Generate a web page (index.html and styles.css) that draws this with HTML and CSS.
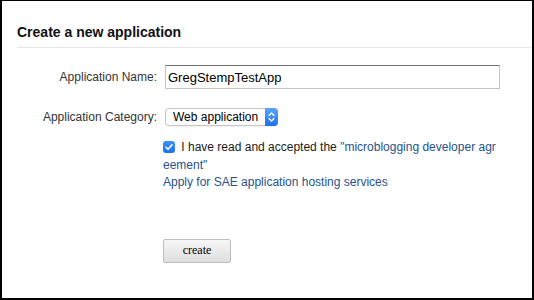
FILE: index.html
```html
<!DOCTYPE html>
<html>
<head>
<meta charset="utf-8">
<link rel="stylesheet" href="styles.css">
</head>
<body>
<div class="frame">
  <h2 class="title">Create a new application</h2>
  <div class="form">
    <div class="row row-name">
      <label class="label">Application Name:</label>
      <input class="text-input" type="text" value="GregStempTestApp">
    </div>
    <div class="row row-cat">
      <label class="label">Application Category:</label>
      <div class="select">
        <span class="select-text">Web application</span>
        <span class="select-arrow">
          <svg width="13" height="18" viewBox="0 0 13 18"><path d="M4 7.5 L6.5 5 L9 7.5 M4 10.5 L6.5 13 L9 10.5" fill="none" stroke="#fff" stroke-width="1.4" stroke-linecap="round" stroke-linejoin="round"/></svg>
        </span>
      </div>
    </div>
    <div class="agree">
      <p class="agree-text"><span class="check"><svg width="12" height="12" viewBox="0 0 12 12"><path d="M3 6.3 L5 8.3 L9 3.8" fill="none" stroke="#fff" stroke-width="1.6" stroke-linecap="round" stroke-linejoin="round"/></svg></span> I have read and accepted the <a class="link" href="#">"microblogging developer agreement"</a></p>
      <a class="link apply" href="#">Apply for SAE application hosting services</a>
    </div>
    <div class="actions">
      <button class="btn" type="button">create</button>
    </div>
  </div>
</div>
</body>
</html>
```

FILE: styles.css
```css
html, body {
  margin: 0;
  padding: 0;
  background: #fff;
}
.frame {
  width: 534px;
  height: 300px;
  box-sizing: border-box;
  border-style: solid;
  border-color: #000;
  border-width: 1px 2px 2px 2px;
  background: #fff;
  font-family: "Liberation Sans", Arial, sans-serif;
  overflow: hidden;
}
.title {
  margin: 0 0 0 15px;
  padding: 23px 0 6px 0;
  font-size: 14px;
  line-height: 17px;
  font-weight: bold;
  color: #111;
  border-bottom: 1px solid #e6e6e6;
}
.form {
  display: flex;
  flex-direction: column;
}
.row {
  display: flex;
  align-items: center;
  gap: 8px;
}
.row-name { margin-top: 17px; }
.row-cat { margin-top: 19px; }
.label {
  width: 155px;
  text-align: right;
  font-size: 12px;
  color: #333;
}
.text-input {
  width: 335px;
  height: 24px;
  box-sizing: border-box;
  margin: 0;
  padding: 0 0 0 2px;
  border: 1px solid #c4c4c4;
  border-top-color: #6e6e6e;
  border-radius: 0;
  font-family: "Liberation Sans", Arial, sans-serif;
  font-size: 13px;
  color: #000;
  outline: none;
}
.select {
  width: 113px;
  height: 18px;
  box-sizing: border-box;
  display: flex;
  align-items: stretch;
  border: 1px solid #c6c6c6;
  border-radius: 4px;
  background: #fff;
  box-shadow: 0 1px 1px rgba(0,0,0,0.06);
}
.select-text {
  flex: 1;
  padding-left: 7px;
  font-size: 12px;
  line-height: 16px;
  color: #000;
}
.select-arrow {
  width: 13px;
  margin: -1px -1px -1px 0;
  display: flex;
  align-items: center;
  justify-content: center;
  background: linear-gradient(#5aa6fb, #1c6ff0);
  border-radius: 0 4px 4px 0;
}
.select-arrow svg { display: block; }
.agree {
  margin: 13px 0 0 161px;
  width: 337px;
  font-size: 12px;
  line-height: 17.5px;
  color: #1a1a1a;
}
.agree-text {
  margin: 0;
  word-break: break-all;
}
.check {
  display: inline-block;
  width: 12px;
  height: 12px;
  border-radius: 3px;
  background: linear-gradient(#3d92f9, #1a72f0);
  vertical-align: -2px;
  margin-right: 3px;
}
.check svg { display: block; }
.link {
  color: #27528c;
  text-decoration: none;
}
.apply {
  display: block;
}
.actions {
  margin: 47px 0 0 161px;
}
.btn {
  width: 68px;
  height: 24px;
  margin: 0;
  padding: 0;
  border: 1px solid #bdbdbd;
  border-radius: 2px;
  background: linear-gradient(#f7f7f7, #dedede);
  font-family: "Liberation Serif", "Times New Roman", serif;
  font-size: 12px;
  color: #000;
}
```
